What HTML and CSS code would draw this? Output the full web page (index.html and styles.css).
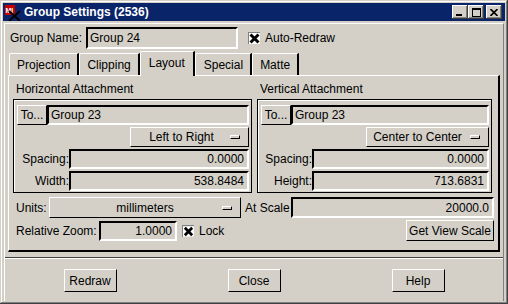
FILE: index.html
```html
<!DOCTYPE html>
<html lang="en">
<head>
    <meta charset="UTF-8">
    <title>Group Settings (2536)</title>
    <link rel="stylesheet" href="styles.css">
</head>
<body>
    <div class="window">
        <div class="titlebar">
            <svg class="app-icon" width="18" height="17" viewBox="0 0 18 17">
                <rect x="2" y="1" width="10" height="10" fill="#c80000"/>
                <text x="2.5" y="8.5" font-size="7" font-weight="bold" font-family="Liberation Sans, sans-serif" fill="#fff">MI</text>
                <path d="M6 7 L17 17 M17 7 L6 17" stroke="#000" stroke-width="2"/>
            </svg>
            <span class="title">Group Settings (2536)</span>
            <div class="win-buttons">
                <span class="win-btn">
                    <svg width="8" height="7" viewBox="0 0 8 7"><rect x="0" y="5" width="6" height="2" fill="#000"/></svg>
                </span>
                <span class="win-btn">
                    <svg width="9" height="9" viewBox="0 0 9 9"><rect x="0.5" y="1" width="8" height="7.5" fill="none" stroke="#000"/><rect x="0" y="0" width="9" height="2" fill="#000"/></svg>
                </span>
                <span class="win-btn close">
                    <svg width="8" height="7" viewBox="0 0 8 7"><path d="M0.5 0 L7.5 7 M7.5 0 L0.5 7" stroke="#000" stroke-width="1.6"/></svg>
                </span>
            </div>
        </div>

        <div class="client">
            <div class="name-row">
                <span class="name-lbl">Group Name:</span>
                <div class="field name-field">Group 24</div>
                <span class="check">
                    <svg width="11" height="11" viewBox="0 0 11 11"><rect width="11" height="11" fill="#fff"/><path d="M1.5 1.5 L9.5 9.5 M9.5 1.5 L1.5 9.5" stroke="#000" stroke-width="3"/></svg>
                </span>
                <span class="check-lbl">Auto-Redraw</span>
            </div>

            <div class="tabs">
                <div class="tab">Projection</div>
                <div class="tab">Clipping</div>
                <div class="tab active">Layout</div>
                <div class="tab special">Special</div>
                <div class="tab">Matte</div>
            </div>

            <div class="panel">
                <div class="attach">
                    <div>
                        <div class="group-title">Horizontal Attachment</div>
                        <div class="group-box">
                            <div class="to-row">
                                <span class="btn to-btn">To...</span>
                                <div class="field">Group 23</div>
                            </div>
                            <div class="menu-row">
                                <span class="option h-opt">Left to Right<i class="ind"></i></span>
                            </div>
                            <div class="num-row h-num">
                                <span class="num-lbl">Spacing:</span>
                                <div class="field num">0.0000</div>
                            </div>
                            <div class="num-row h-num">
                                <span class="num-lbl">Width:</span>
                                <div class="field num">538.8484</div>
                            </div>
                        </div>
                    </div>
                    <div>
                        <div class="group-title">Vertical Attachment</div>
                        <div class="group-box">
                            <div class="to-row">
                                <span class="btn to-btn">To...</span>
                                <div class="field">Group 23</div>
                            </div>
                            <div class="menu-row">
                                <span class="option v-opt">Center to Center<i class="ind"></i></span>
                            </div>
                            <div class="num-row v-num">
                                <span class="num-lbl">Spacing:</span>
                                <div class="field num">0.0000</div>
                            </div>
                            <div class="num-row v-num">
                                <span class="num-lbl">Height:</span>
                                <div class="field num">713.6831</div>
                            </div>
                        </div>
                    </div>
                </div>

                <div class="units-row">
                    <span class="units-lbl">Units:</span>
                    <span class="option units-opt">millimeters<i class="ind"></i></span>
                    <span class="scale-lbl">At Scale</span>
                    <div class="field num scale-field">20000.0</div>
                </div>

                <div class="zoom-row">
                    <span class="zoom-lbl">Relative Zoom:</span>
                    <div class="field num zoom-field">1.0000</div>
                    <span class="check lock-check">
                        <svg width="12" height="11" viewBox="0 0 12 11"><rect width="12" height="11" fill="#fff"/><path d="M2 1.5 L10 9.5 M10 1.5 L2 9.5" stroke="#000" stroke-width="3"/></svg>
                    </span>
                    <span class="check-lbl">Lock</span>
                    <span class="btn view-btn">Get View Scale</span>
                </div>
            </div>

            <div class="separator"></div>

            <div class="footer">
                <div class="footer-cell"><span class="btn push">Redraw</span></div>
                <div class="footer-cell"><span class="btn push">Close</span></div>
                <div class="footer-cell"><span class="btn push">Help</span></div>
            </div>
        </div>
    </div>
</body>
</html>
```

FILE: styles.css
```css
body {
    margin: 0;
    font-family: "Liberation Sans", Arial, sans-serif;
    font-size: 12px;
    color: #000;
    background: #d4d0c8;
}
.window {
    width: 508px;
    height: 304px;
    box-sizing: border-box;
    padding: 3px;
    display: flex;
    flex-direction: column;
    background: #d4d0c8;
    box-shadow: inset -1px -1px #404040, inset 1px 1px #d4d0c8,
                inset -2px -2px #808080, inset 2px 2px #fff;
}
.titlebar {
    height: 18px;
    background: #0a246a;
    display: flex;
    align-items: center;
    flex-shrink: 0;
}
.app-icon {
    flex-shrink: 0;
}
.title {
    margin-left: 3px;
    color: #fff;
    font-weight: bold;
    font-size: 12px;
}
.win-buttons {
    margin-left: auto;
    margin-right: 3px;
    display: flex;
}
.win-btn {
    width: 16px;
    height: 14px;
    display: flex;
    align-items: center;
    justify-content: center;
    background: #d4d0c8;
    box-shadow: inset -1px -1px #404040, inset 1px 1px #fff,
                inset -2px -2px #808080, inset 2px 2px #d4d0c8;
}
.win-btn.close {
    margin-left: 2px;
}
.client {
    flex: 1;
    margin: 2px 1px 0 1px;
    padding: 3px 3px 0 3px;
    border-top: 1px solid #fff;
    border-left: 1px solid #fff;
    border-right: 1px solid #808080;
    display: flex;
    flex-direction: column;
}
.field {
    flex: 1;
    height: 20px;
    box-sizing: border-box;
    border-top: 2px solid #000;
    border-left: 2px solid #000;
    border-right: 2px solid #fff;
    border-bottom: 2px solid #fff;
    padding: 0 3px 0 2px;
    display: flex;
    align-items: center;
    white-space: nowrap;
}
.field.num {
    justify-content: flex-end;
}
.btn {
    box-sizing: border-box;
    border-top: 1px solid #fff;
    border-left: 1px solid #fff;
    border-right: 1px solid #000;
    border-bottom: 1px solid #000;
    display: flex;
    align-items: center;
    justify-content: center;
    white-space: nowrap;
}
.check {
    display: flex;
    width: 12px;
    height: 12px;
    box-sizing: border-box;
    border-top: 1px solid #808080;
    border-left: 1px solid #808080;
}

/* group name row */
.name-row {
    height: 22px;
    display: flex;
    align-items: center;
    padding-left: 2px;
}
.name-lbl {
    width: 76px;
}
.name-field {
    flex: none;
    width: 152px;
    height: 22px;
}
.name-row .check {
    margin-left: 10px;
}
.check-lbl {
    margin-left: 5px;
}

/* tabs */
.tabs {
    margin-top: 2px;
    height: 24px;
    display: flex;
    align-items: flex-end;
}
.tab {
    height: 22px;
    box-sizing: border-box;
    padding: 0 7px;
    border-top: 1px solid #fff;
    border-left: 1px solid #fff;
    border-right: 2px solid #000;
    border-top-left-radius: 2px;
    display: flex;
    align-items: center;
}
.tab:first-child {
    margin-left: 1px;
}
.tab.active {
    height: 25px;
    margin-bottom: -1px;
    padding: 0 8px 2px 8px;
    position: relative;
    z-index: 1;
    background: #d4d0c8;
}
.tab.special {
    padding: 0 7px 0 8px;
}

/* layout panel */
.panel {
    border-top: 1px solid #fff;
    border-left: 1px solid #fff;
    border-right: 2px solid #000;
    border-bottom: 2px solid #000;
    padding: 6px 4px 9px 4px;
}
.attach {
    display: grid;
    grid-template-columns: 239px 235px;
    column-gap: 5px;
}
.group-title {
    height: 15px;
    line-height: 15px;
    padding-left: 3px;
    margin-bottom: 2px;
}
.group-box {
    border: 1px solid #000;
    box-shadow: inset 1px 1px #fff;
    padding: 5px 2px 1px 3px;
    display: flex;
    flex-direction: column;
    gap: 2px;
}
.to-row {
    display: flex;
    height: 20px;
}
.to-btn {
    width: 30px;
    height: 20px;
}
.menu-row {
    display: flex;
    justify-content: flex-end;
    height: 20px;
}
.option {
    height: 20px;
    box-sizing: border-box;
    border-top: 1px solid #fff;
    border-left: 1px solid #fff;
    border-right: 1px solid #000;
    border-bottom: 1px solid #000;
    display: flex;
    align-items: center;
    justify-content: center;
    padding-right: 16px;
    position: relative;
    white-space: nowrap;
}
.ind {
    position: absolute;
    right: 8px;
    top: 7px;
    width: 10px;
    height: 4px;
    box-sizing: border-box;
    border-top: 1px solid #fff;
    border-left: 1px solid #fff;
    border-right: 1px solid #000;
    border-bottom: 1px solid #000;
}
.h-opt {
    width: 119px;
}
.v-opt {
    width: 123px;
    padding-right: 20px;
}
.num-row {
    display: grid;
    height: 20px;
    align-items: center;
}
.h-num {
    grid-template-columns: 52px 1fr;
}
.v-num {
    grid-template-columns: 51px 1fr;
}
.num-lbl {
    text-align: right;
}

/* units and zoom rows */
.units-row, .zoom-row {
    display: flex;
    align-items: center;
    height: 21px;
}
.units-row {
    margin-top: 4px;
}
.zoom-row {
    margin-top: 2px;
}
.units-lbl {
    width: 33px;
    padding-left: 3px;
}
.units-opt {
    width: 192px;
    height: 21px;
    padding-right: 0;
}
.units-opt .ind {
    right: 8px;
    top: 8px;
}
.scale-lbl {
    width: 46px;
    margin-left: 4px;
}
.scale-field {
    height: 21px;
}
.zoom-lbl {
    width: 83px;
    padding-left: 3px;
}
.zoom-field {
    flex: none;
    width: 78px;
}
.lock-check {
    margin-left: 5px;
}
.view-btn {
    margin-left: auto;
    width: 88px;
    height: 21px;
}

/* footer */
.separator {
    margin: 5px -3px 0 -3px;
    border-top: 1px solid #404040;
    border-bottom: 1px solid #fff;
}
.footer {
    display: grid;
    grid-template-columns: repeat(3, 1fr);
    padding-top: 10px;
}
.footer-cell {
    display: flex;
    justify-content: center;
}
.push {
    width: 53px;
    height: 23px;
}
```
